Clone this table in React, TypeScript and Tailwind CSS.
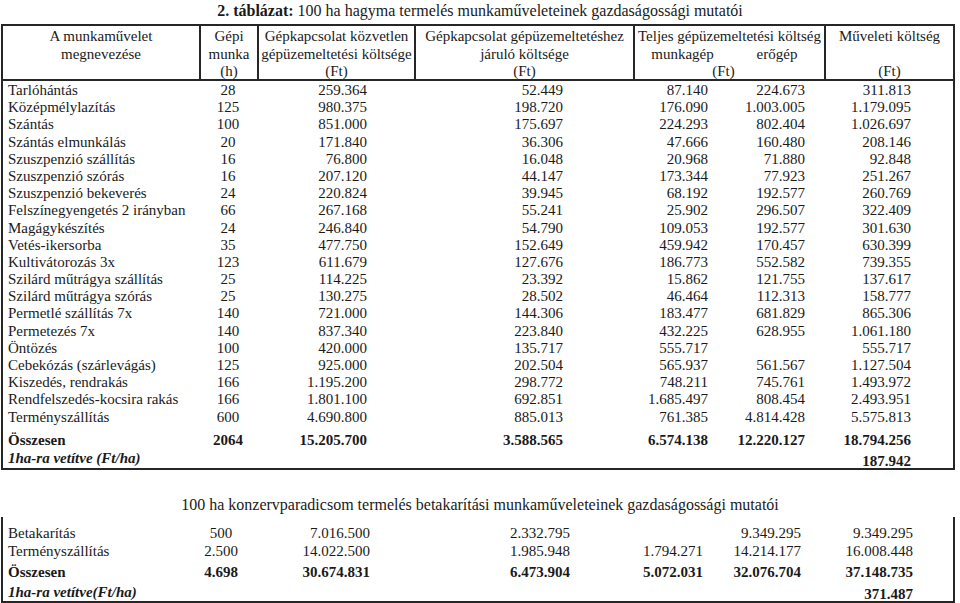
const rows1: string[][] = [
  ["Tarlóhántás", "28", "259.364", "52.449", "87.140", "224.673", "311.813"],
  ["Középmélylazítás", "125", "980.375", "198.720", "176.090", "1.003.005", "1.179.095"],
  ["Szántás", "100", "851.000", "175.697", "224.293", "802.404", "1.026.697"],
  ["Szántás elmunkálás", "20", "171.840", "36.306", "47.666", "160.480", "208.146"],
  ["Szuszpenzió szállítás", "16", "76.800", "16.048", "20.968", "71.880", "92.848"],
  ["Szuszpenzió szórás", "16", "207.120", "44.147", "173.344", "77.923", "251.267"],
  ["Szuszpenzió bekeverés", "24", "220.824", "39.945", "68.192", "192.577", "260.769"],
  ["Felszínegyengetés 2 irányban", "66", "267.168", "55.241", "25.902", "296.507", "322.409"],
  ["Magágykészítés", "24", "246.840", "54.790", "109.053", "192.577", "301.630"],
  ["Vetés-ikersorba", "35", "477.750", "152.649", "459.942", "170.457", "630.399"],
  ["Kultivátorozás 3x", "123", "611.679", "127.676", "186.773", "552.582", "739.355"],
  ["Szilárd műtrágya szállítás", "25", "114.225", "23.392", "15.862", "121.755", "137.617"],
  ["Szilárd műtrágya szórás", "25", "130.275", "28.502", "46.464", "112.313", "158.777"],
  ["Permetlé szállítás 7x", "140", "721.000", "144.306", "183.477", "681.829", "865.306"],
  ["Permetezés 7x", "140", "837.340", "223.840", "432.225", "628.955", "1.061.180"],
  ["Öntözés", "100", "420.000", "135.717", "555.717", "", "555.717"],
  ["Cebekózás (szárlevágás)", "125", "925.000", "202.504", "565.937", "561.567", "1.127.504"],
  ["Kiszedés, rendrakás", "166", "1.195.200", "298.772", "748.211", "745.761", "1.493.972"],
  ["Rendfelszedés-kocsira rakás", "166", "1.801.100", "692.851", "1.685.497", "808.454", "2.493.951"],
  ["Terményszállítás", "600", "4.690.800", "885.013", "761.385", "4.814.428", "5.575.813"],
];

const cols = "grid grid-cols-[196px_58px_157px_219px_97px_94px_129px]";

function Row1({ r, bold, h }: { r: string[]; bold?: boolean; h: string }) {
  return (
    <div className={`${cols} ${h} items-center ${bold ? "font-bold" : ""}`}>
      <div className="pl-[5px] whitespace-nowrap">{r[0]}</div>
      <div className="text-center">{r[1]}</div>
      <div className="text-right pr-[47px]">{r[2]}</div>
      <div className="text-right pr-[70px]">{r[3]}</div>
      <div className="text-right pr-[22px]">{r[4]}</div>
      <div className="text-right pr-[19px]">{r[5]}</div>
      <div className="text-right pr-[42px]">{r[6]}</div>
    </div>
  );
}

function Row2({ r, bold }: { r: string[]; bold?: boolean }) {
  return (
    <div className={`${cols} h-[18px] items-center ${bold ? "font-bold" : ""}`}>
      <div className="pl-[5px] whitespace-nowrap">{r[0]}</div>
      <div className="text-center pr-[14px]">{r[1]}</div>
      <div className="text-right pr-[44px]">{r[2]}</div>
      <div className="text-right pr-[63px]">{r[3]}</div>
      <div className="text-right pr-[27px]">{r[4]}</div>
      <div className="text-right pr-[23px]">{r[5]}</div>
      <div className="text-right pr-[40px]">{r[6]}</div>
    </div>
  );
}

export default function App() {
  return (
    <div className="w-[960px] h-[603px] bg-white text-[#1a1a1a] text-[15px] overflow-hidden font-['Liberation_Serif',serif]">
      <div className="h-[24px] pt-[1px] text-center text-[16px] leading-[20px]">
        <span className="font-bold">2. táblázat:</span> 100 ha hagyma termelés munkaműveleteinek gazdaságossági mutatói
      </div>

      <div className="ml-[1px] w-[954px] border-2 border-[#262626]">
        {/* fejléc */}
        <div className={`${cols} h-[55px] border-b-2 border-[#262626] leading-[17.5px] text-center`}>
          <div className="pt-[2px]">
            A munkaművelet
            <br />
            megnevezése
          </div>
          <div className="border-l-2 border-[#262626] pt-[2px]">
            Gépi
            <br />
            munka
            <br />
            (h)
          </div>
          <div className="border-l-2 border-[#262626] pt-[2px] whitespace-nowrap">
            Gépkapcsolat közvetlen
            <br />
            gépüzemeltetési költsége
            <br />
            (Ft)
          </div>
          <div className="border-l-2 border-[#262626] pt-[2px] whitespace-nowrap">
            Gépkapcsolat gépüzemeltetéshez
            <br />
            járuló költsége
            <br />
            (Ft)
          </div>
          <div className="col-span-2 border-l-2 border-[#262626] pt-[2px] whitespace-nowrap">
            <div>Teljes gépüzemeltetési költség</div>
            <div className="grid grid-cols-[95px_94px]">
              <span>munkagép</span>
              <span>erőgép</span>
            </div>
            <div className="pr-[12px]">(Ft)</div>
          </div>
          <div className="border-l-2 border-[#262626] pt-[2px]">
            Műveleti költség
            <br />
            &nbsp;
            <br />
            (Ft)
          </div>
        </div>

        <div className="pt-[1px] leading-[17.2px]">
          {rows1.map((r) => (
            <Row1 key={r[0]} r={r} h="h-[17.2px]" />
          ))}
        </div>
        <div className="mt-[3px]">
          <Row1 r={["Összesen", "2064", "15.205.700", "3.588.565", "6.574.138", "12.220.127", "18.794.256"]} bold h="h-[17px]" />
        </div>
        <div className="mt-[4px] mb-[1px] relative">
          <Row1 r={["", "", "", "", "", "", "187.942"]} bold h="h-[17px]" />
          <div className="absolute left-[5px] top-0 h-[17px] leading-[17px] font-bold italic">1ha-ra vetítve (Ft/ha)</div>
        </div>
      </div>

      <div className="mt-[25px] h-[22px] text-center text-[16px] leading-[20px]">
        100 ha konzervparadicsom termelés betakarítási munkaműveleteinek gazdaságossági mutatói
      </div>

      <div className="ml-[1px] w-[954px] border-x-2 border-b-2 border-[#262626] pt-[5px]">
        <Row2 r={["Betakarítás", "500", "7.016.500", "2.332.795", "", "9.349.295", "9.349.295"]} />
        <Row2 r={["Terményszállítás", "2.500", "14.022.500", "1.985.948", "1.794.271", "14.214.177", "16.008.448"]} />
        <div className="mt-[3px]">
          <Row2 r={["Összesen", "4.698", "30.674.831", "6.473.904", "5.072.031", "32.076.704", "37.148.735"]} bold />
        </div>
        <div className="mt-[4px] relative">
          <Row2 r={["", "", "", "", "", "", "371.487"]} bold />
          <div className="absolute left-[5px] top-0 h-[18px] leading-[18px] font-bold italic">1ha-ra vetítve(Ft/ha)</div>
        </div>
      </div>
    </div>
  );
}
